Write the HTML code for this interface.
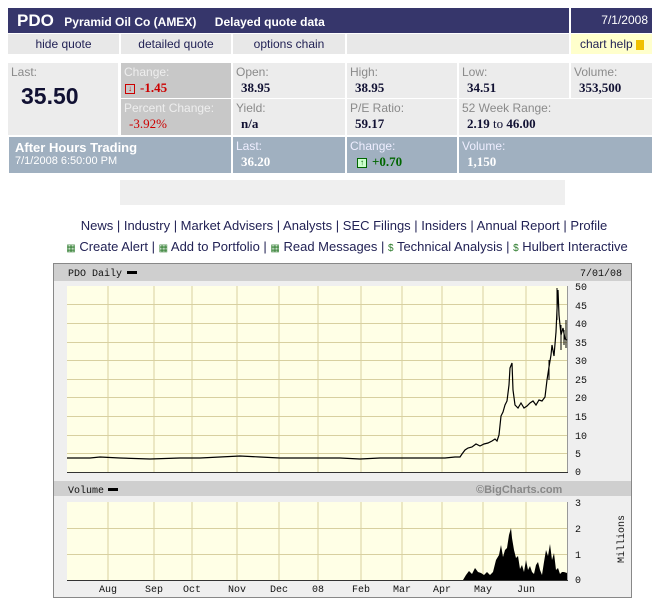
<!DOCTYPE html>
<html><head><meta charset="utf-8"><style>
*{margin:0;padding:0;box-sizing:border-box}
body{width:652px;height:605px;background:#fff;font-family:"Liberation Sans",Arial,sans-serif;position:relative;overflow:hidden}
.a{position:absolute}
.lbl{color:#8a8a8a;font-size:12px}
.val{color:#111133;font-size:13px;font-weight:bold;font-family:"Liberation Serif",serif}
.c{position:absolute}
.c .lbl{position:absolute;left:3px;top:2px}
.c .val{position:absolute;left:8px;top:17px}
.nav{position:absolute;top:34px;height:20px;background:#e8e8e8;font-size:12px;color:#222255;text-align:center;line-height:20px}
.mono{font-family:"Liberation Mono",monospace;font-size:11px}
</style></head><body>
<div class="a" style="left:8px;top:8px;width:561px;height:25px;background:#36366b;color:#fff;line-height:25px">
<span style="font-size:17px;font-weight:bold;margin-left:9px">PDO</span>
<span style="font-size:12px;font-weight:bold;margin-left:6px">Pyramid Oil Co (AMEX)</span>
<span style="font-size:12px;font-weight:bold;margin-left:14px">Delayed quote data</span></div>
<div class="a" style="left:571px;top:8px;width:81px;height:25px;background:#36366b;color:#fff;font-size:12px;line-height:25px;text-align:right;padding-right:4px">7/1/2008</div>
<div class="nav" style="left:8px;width:111px">hide quote</div>
<div class="nav" style="left:121px;width:110px">detailed quote</div>
<div class="nav" style="left:233px;width:112px">options chain</div>
<div class="nav" style="left:347px;width:222px"></div>
<div class="nav" style="left:571px;width:81px;background:#ffffcc;text-align:right;padding-right:8px">chart help <span style="display:inline-block;width:8px;height:10px;background:#f0c000;vertical-align:middle"></span></div>

<div class="c" style="left:8px;top:63px;width:110px;height:72px;background:#ececec"><span class="lbl">Last:</span><span style="position:absolute;left:13px;top:20px;font-size:23px;font-weight:bold;color:#111133">35.50</span></div>
<div class="c" style="left:121px;top:63px;width:110px;height:35px;background:#c8c8c8"><span class="lbl" style="color:#eee">Change:</span><span class="val" style="color:#cc0000;left:4px"><span style="display:inline-block;width:10px;height:10px;border:1px solid #cc0000;font-size:8px;line-height:8px;text-align:center;vertical-align:middle;margin-right:5px">↓</span>-1.45</span></div>
<div class="c" style="left:121px;top:99px;width:110px;height:36px;background:#c8c8c8"><span class="lbl" style="color:#eee">Percent Change:</span><span class="val" style="color:#cc0000;left:8px;font-weight:normal">-3.92%</span></div>
<div class="c" style="left:233px;top:63px;width:112px;height:35px;background:#ececec"><span class="lbl">Open:</span><span class="val">38.95</span></div>
<div class="c" style="left:347px;top:63px;width:110px;height:35px;background:#ececec"><span class="lbl">High:</span><span class="val">38.95</span></div>
<div class="c" style="left:459px;top:63px;width:110px;height:35px;background:#ececec"><span class="lbl">Low:</span><span class="val">34.51</span></div>
<div class="c" style="left:571px;top:63px;width:81px;height:35px;background:#ececec"><span class="lbl">Volume:</span><span class="val">353,500</span></div>
<div class="c" style="left:233px;top:99px;width:112px;height:36px;background:#ececec"><span class="lbl">Yield:</span><span class="val">n/a</span></div>
<div class="c" style="left:347px;top:99px;width:110px;height:36px;background:#ececec"><span class="lbl">P/E Ratio:</span><span class="val">59.17</span></div>
<div class="c" style="left:459px;top:99px;width:193px;height:36px;background:#ececec"><span class="lbl">52 Week Range:</span><span class="val">2.19 <span style="font-weight:normal">to</span> 46.00</span></div>

<div class="a" style="left:9px;top:137px;width:222px;height:36px;background:#a0b0c0;color:#fff"><div style="font-weight:bold;font-size:13px;margin:3px 0 0 6px">After Hours Trading</div><div style="font-size:11px;margin-left:6px">7/1/2008 6:50:00 PM</div></div>
<div class="c" style="left:233px;top:137px;width:112px;height:36px;background:#a0b0c0"><span class="lbl" style="color:#eef">Last:</span><span class="val" style="color:#fff">36.20</span></div>
<div class="c" style="left:347px;top:137px;width:110px;height:36px;background:#a0b0c0"><span class="lbl" style="color:#eef">Change:</span><span class="val" style="color:#006600;left:10px"><span style="display:inline-block;width:10px;height:10px;border:1px solid #006600;background:#cfc;font-size:8px;line-height:8px;text-align:center;vertical-align:middle;margin-right:5px">↑</span>+0.70</span></div>
<div class="c" style="left:459px;top:137px;width:193px;height:36px;background:#a0b0c0"><span class="lbl" style="color:#eef">Volume:</span><span class="val" style="color:#fff">1,150</span></div>

<div class="a" style="left:120px;top:180px;width:445px;height:25px;background:#efefef"></div>

<div class="a" style="left:0;top:218px;width:688px;text-align:center;font-size:13px;color:#222255">News | Industry | Market Advisers | Analysts | SEC Filings | Insiders | Annual Report | Profile</div>
<div class="a" style="left:0;top:239px;width:694px;text-align:center;font-size:13px;color:#222255"><span style="color:#2a7a2a;font-size:10px">▦</span> Create Alert | <span style="color:#2a7a2a;font-size:10px">▦</span> Add to Portfolio | <span style="color:#2a7a2a;font-size:10px">▦</span> Read Messages | <span style="color:#2a7a2a;font-size:10px">$</span> Technical Analysis | <span style="color:#2a7a2a;font-size:10px">$</span> Hulbert Interactive</div>

<svg class="a" style="left:0;top:0" width="652" height="605">
<rect x="53.5" y="263.5" width="578" height="334" fill="#efefef" stroke="#888"/>
<rect x="54" y="264" width="577" height="17" fill="#cfcfcf"/>
<rect x="54" y="481" width="577" height="15" fill="#cfcfcf"/>
<rect x="67" y="286" width="501" height="186" fill="#ffffe6"/>
<rect x="67" y="502" width="501" height="78" fill="#ffffe6"/>
<g stroke="#d8d0a0" stroke-width="1">
<path d="M108 286V472M154 286V472M192 286V472M237 286V472M279 286V472M318 286V472M361 286V472M402 286V472M442 286V472M483 286V472M526 286V472"/>
<path d="M67 304.5H568M67 323.5H568M67 342.5H568M67 360.5H568M67 379.5H568M67 397.5H568M67 416.5H568M67 435.5H568M67 453.5H568"/>
<path d="M108 502V580M154 502V580M192 502V580M237 502V580M279 502V580M318 502V580M361 502V580M402 502V580M442 502V580M483 502V580M526 502V580"/>
<path d="M67 528.5H568M67 554.5H568"/>
</g>
<path d="M67 472.5H568M67 580.5H568" stroke="#333"/>
<path d="M567.5 286V472M567.5 502V580" stroke="#999"/>
<polyline fill="none" stroke="#000" stroke-width="1.2" points="67,458 90,458 100,457 120,458 150,459 180,458 200,458 240,456 260,457 280,458 300,458 320,458 340,458 360,459 380,458 400,458 430,458 445,458 455,457 460,457 462,454 465,450 468,448 472,447 476,444 480,446 484,444 488,443 492,441 495,439 497,441 499,435 501,416 503,412 505,405 507,401 509,385 510,368 512,363 513,390 515,405 518,408 521,403 524,408 527,406 530,403 533,401 536,405 539,400 542,401 545,397 547,380 549,367 551,355 552,345 554,356 556,332 557,310 558,290 559,315 561,335 563,328 565,339 567,340"/>
<path d="M561 325V350M564 330V345M566 320V348M557 288V320M549 360V380" stroke="#000"/>
<polygon fill="#000" points="463,580 466,575 469,571 472,574 475,568 478,572 481,573 484,575 487,572 490,575 493,572 496,560 499,555 501,545 503,557 505,550 507,548 509,535 511,528 512,538 514,550 516,558 518,556 520,569 522,565 524,572 526,560 528,570 530,566 532,572 534,574 536,565 538,562 540,570 542,575 544,562 546,550 548,556 550,544 552,560 554,553 556,570 558,568 560,574 562,572 564,572 567,573 567,580"/>
<g font-family="Liberation Mono,monospace" font-size="10" fill="#111">
<text x="68" y="276">PDO Daily</text><rect x="127" y="271" width="10" height="3" fill="#000"/>
<text x="580" y="276">7/01/08</text>
<text x="68" y="493">Volume</text><rect x="108" y="488" width="10" height="3" fill="#000"/>
<text x="476" y="493" font-family="Liberation Sans,sans-serif" font-weight="bold" font-size="11" fill="#888">©BigCharts.com</text>
<text x="575" y="290">50</text><text x="575" y="309">45</text><text x="575" y="327">40</text><text x="575" y="346">35</text><text x="575" y="364">30</text><text x="575" y="383">25</text><text x="575" y="401">20</text><text x="575" y="420">15</text><text x="575" y="439">10</text><text x="575" y="457">5</text><text x="575" y="475">0</text>
<text x="575" y="506">3</text><text x="575" y="532">2</text><text x="575" y="558">1</text><text x="575" y="583">0</text>
<text transform="translate(624,563) rotate(-90)">Millions</text>
<g text-anchor="middle"><text x="108" y="592">Aug</text><text x="154" y="592">Sep</text><text x="192" y="592">Oct</text><text x="237" y="592">Nov</text><text x="279" y="592">Dec</text><text x="318" y="592">08</text><text x="361" y="592">Feb</text><text x="402" y="592">Mar</text><text x="442" y="592">Apr</text><text x="483" y="592">May</text><text x="526" y="592">Jun</text></g>
</g>
</svg>
</body></html>
